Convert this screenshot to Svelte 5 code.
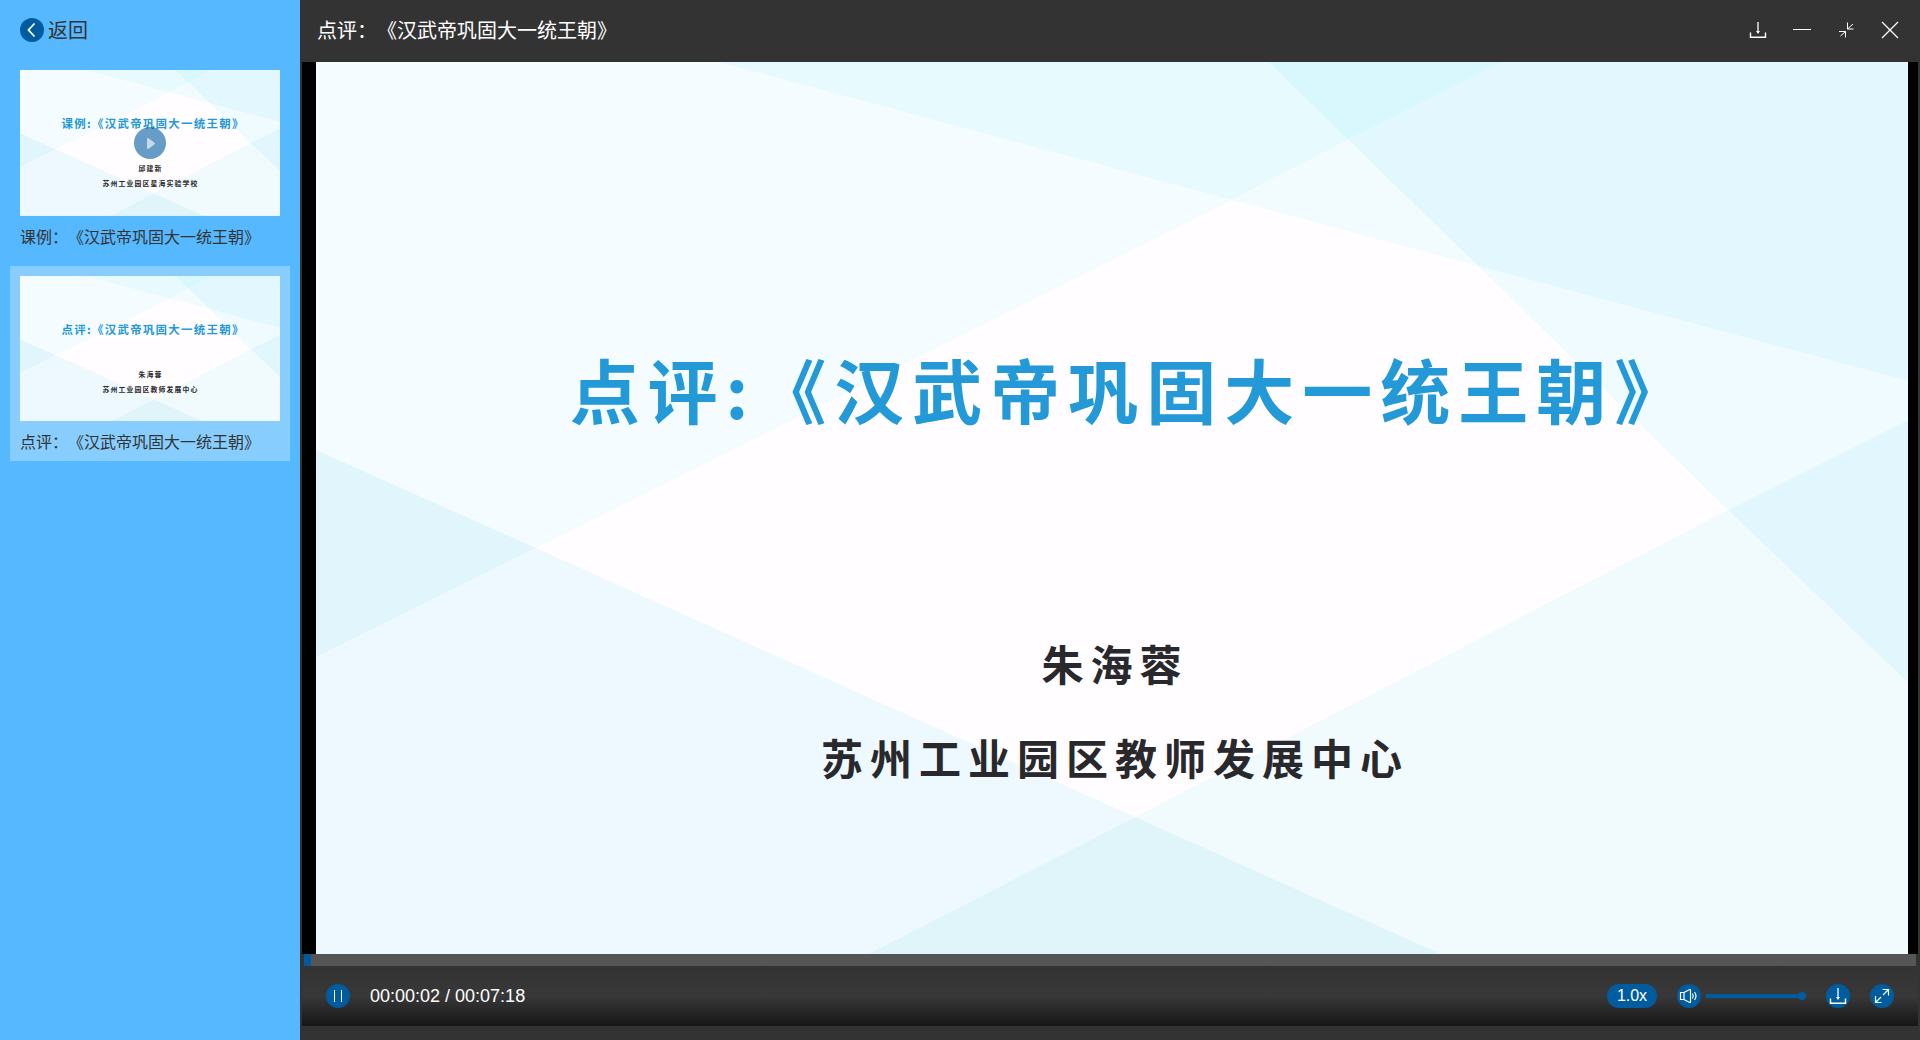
<script>
  const facets = [
    ['0,0 402,0 916,138 220,486 0,388', '#f4fcff'],
    ['402,0 952,0 1032,78 916,138', '#e7fafe'],
    ['952,0 1187,0 1032,78', '#d9f8fe'],
    ['1187,0 1592,0 1592,319 1162,204 1032,78', '#e3f7fe'],
    ['916,138 1032,78 1162,204', '#f2fcff'],
    ['1162,204 1592,319 1592,358 1412,448', '#effbfe'],
    ['1592,358 1592,621 1412,448', '#e2f7fd'],
    ['1412,448 1592,621 1592,892 1125,892 819,755', '#f1fafd'],
    ['819,755 1125,892 552,892', '#e0f5fa'],
    ['0,595 220,486 819,755 552,892 0,892', '#edf9fe'],
    ['0,388 220,486 0,595', '#e1f6fc']
  ];

  const lessons = [
    {
      label: '课例：《汉武帝巩固大一统王朝》',
      title: '课例:《汉武帝巩固大一统王朝》',
      teacher: '邱建新',
      school: '苏州工业园区星海实验学校'
    },
    {
      label: '点评：《汉武帝巩固大一统王朝》',
      title: '点评:《汉武帝巩固大一统王朝》',
      teacher: '朱海蓉',
      school: '苏州工业园区教师发展中心'
    }
  ];

  let current = $state(1);
  let paused = $state(false);
  let volume = $state(100);
  const progress = 2 / 438 * 100;
</script>

{#snippet slide(lesson)}
  <svg class="slide" viewBox="0 0 1592 892" role="img" aria-label={lesson.title}>
    <rect width="1592" height="892" fill="#fffdff" />
    {#each facets as [points, fill]}
      <polygon {points} {fill} />
    {/each}
    <text class="slide-title" x="815" y="357">{lesson.title}</text>
    <text class="slide-name" x="799" y="619">{lesson.teacher}</text>
    <text class="slide-name" x="799" y="713">{lesson.school}</text>
  </svg>
{/snippet}

{#snippet downloadIcon()}
  <svg class="icon" viewBox="0 0 24 24">
    <path d="M12 4v10.500" stroke-width="1.300" />
    <path d="M4.500 14.500v4.700h15v-4.700" stroke-width="1.400" />
    <path class="solid" d="M10 13h4l-2 3z" />
  </svg>
{/snippet}

<div class="app">
  <aside>
    <button class="back">
      <svg viewBox="0 0 24 24">
        <circle cx="12" cy="12" r="12" fill="#005c9f" />
        <path d="M14.500 5.500 8.500 12l6 6.500" fill="none" stroke="#fff" stroke-width="1.800" />
      </svg>
      <span>返回</span>
    </button>
    <nav>
      {#each lessons as lesson, i}
        <button class="lesson" class:active={i === current} onclick={() => (current = i)}>
          <span class="thumb">
            {@render slide(lesson)}
            {#if i !== current}
              <svg class="play" viewBox="0 0 32 32">
                <circle cx="16" cy="16" r="16" fill="#005c9f" fill-opacity="0.6" />
                <path d="M14 12v9l6-4.500z" fill="#c3daea" stroke="#c3daea" stroke-width="2" stroke-linejoin="round" />
              </svg>
            {/if}
          </span>
          <span class="label">{lesson.label}</span>
        </button>
      {/each}
    </nav>
  </aside>

  <main>
    <header>
      <h1>{lessons[current].label}</h1>
      <button class="tool" aria-label="下载">{@render downloadIcon()}</button>
      <button class="tool" aria-label="最小化">
        <svg class="icon" viewBox="0 0 24 24"><path d="M3 11.500h18" /></svg>
      </button>
      <button class="tool" aria-label="还原">
        <svg class="icon" viewBox="0 0 24 24">
          <path d="M13.500 4.500v6.500h6M13.500 11l5.500-5M5 13.500h6.500v6M11.500 13.500 6.500 18" />
        </svg>
      </button>
      <button class="tool" aria-label="关闭">
        <svg class="icon" viewBox="0 0 24 24"><path d="m4 4 16 16M20 4 4 20" stroke-width="1.200" /></svg>
      </button>
    </header>

    <section class="player">
      <div class="video">{@render slide(lessons[current])}</div>
      <div class="progress"><div class="played" style="width: {progress}%"></div></div>
      <div class="controls">
        <button class="round" aria-label="暂停" onclick={() => (paused = !paused)}>
          <svg class="icon" viewBox="0 0 24 24">
            {#if paused}
              <path d="M9 6v12l9-6z" />
            {:else}
              <path d="M8.500 6v12M15.500 6v12" />
            {/if}
          </svg>
        </button>
        <span class="time">00:00:02 / 00:07:18</span>
        <button class="speed">1.0x</button>
        <div class="sound">
          <button class="round" aria-label="静音">
            <svg class="icon" viewBox="0 0 24 24">
              <path d="M3.500 8.500h3.500v7H3.500zM7 8.500 12.500 5.500h1v13h-1L7 15.500M15.500 9.500q1.500 2.500 0 5M17.500 8q3 4 0 8" stroke-width="1.200" />
            </svg>
          </button>
          <input type="range" min="0" max="100" aria-label="音量" bind:value={volume} />
        </div>
        <button class="round" aria-label="下载视频">{@render downloadIcon()}</button>
        <button class="round" aria-label="全屏">
          <svg class="icon" viewBox="0 0 24 24">
            <path d="M12.500 5.500h6v6M18.500 5.500l-5.500 5.500M5.500 12v6.500h6M5.500 18.500 11 13" stroke-width="1.200" />
          </svg>
        </button>
      </div>
    </section>
  </main>
</div>

<style>
  :global(body) {
    margin: 0;
  }

  .app {
    display: flex;
    min-height: 100vh;
    background: #333;
    color: #fff;
    font-family: 'Liberation Sans', 'Noto Sans CJK SC', sans-serif;
  }

  button {
    padding: 0;
    border: 0;
    background: none;
    color: inherit;
    font: inherit;
    cursor: pointer;
  }

  svg {
    display: block;
  }

  aside {
    flex: 0 0 300px;
    background: #56b9ff;
    color: #333;
  }

  .back {
    display: flex;
    align-items: center;
    gap: 4px;
    height: 60px;
    padding-left: 20px;
    font-size: 20px;
    line-height: 24px;
  }

  .back span,
  h1 {
    padding-top: 2px;
  }

  .back svg {
    width: 24px;
    height: 24px;
  }

  nav {
    display: flex;
    flex-direction: column;
    gap: 10px;
    padding: 0 10px;
  }

  .lesson {
    padding: 10px 10px 0;
    text-align: left;
  }

  .lesson.active {
    background: #87ceff;
  }

  .thumb {
    display: grid;
    place-items: center;
  }

  .thumb > :global(svg) {
    grid-area: 1 / 1;
  }

  .play {
    width: 32px;
    height: 32px;
  }

  .label {
    display: block;
    padding-top: 4px;
    font-size: 16px;
    line-height: 36px;
    white-space: nowrap;
  }

  .label,
  h1 {
    text-spacing-trim: space-all;
  }

  .slide {
    width: 100%;
    height: 100%;
  }

  .slide-title,
  .slide-name {
    font-family: 'Noto Sans CJK SC', sans-serif;
    font-weight: 700;
    text-anchor: middle;
  }

  .slide-title {
    fill: #2399d7;
    font-size: 70px;
    letter-spacing: 8px;
  }

  .slide-name {
    fill: #29292d;
    font-size: 42px;
    letter-spacing: 7px;
  }

  main {
    display: flex;
    flex: 1;
    flex-direction: column;
    min-width: 0;
  }

  header {
    display: flex;
    align-items: center;
    gap: 20px;
    height: 60px;
    padding: 0 18px 2px 17px;
  }

  h1 {
    flex: 1;
    margin: 0;
    font-size: 20px;
    font-weight: 400;
    line-height: 24px;
  }

  .tool,
  .round {
    width: 24px;
    height: 24px;
  }

  .round {
    border-radius: 50%;
    background: #005c9f;
  }

  .icon {
    width: 24px;
    height: 24px;
    fill: none;
    stroke: #fff;
    stroke-width: 1;
  }

  .solid {
    fill: #fff;
    stroke: none;
  }

  .player {
    display: flex;
    flex: 1;
    flex-direction: column;
    padding: 0 2px 14px;
  }

  .video {
    display: grid;
    flex: 1 1 0;
    min-height: 0;
    padding: 0 10px 0 14px;
    background: #000;
  }

  .video .slide {
    min-height: 0;
  }

  .progress {
    height: 12px;
    margin: 0 2px;
    background: #555;
  }

  .played {
    height: 100%;
    background: #005c9f;
  }

  .controls {
    display: flex;
    align-items: center;
    gap: 20px;
    height: 60px;
    padding: 0 24px;
    background: linear-gradient(#333, #383838 50%, #161616);
  }

  .time {
    flex: 1;
    font-size: 18px;
    line-height: 24px;
  }

  .speed {
    width: 50px;
    height: 24px;
    border-radius: 12px;
    background: #005c9f;
    font-size: 16px;
    line-height: 24px;
  }

  .sound {
    display: flex;
    align-items: center;
    gap: 5px;
  }

  input {
    width: 100px;
    height: 8px;
    margin: 0;
    appearance: none;
    background: linear-gradient(#005c9f, #005c9f) center / 100% 4px no-repeat;
    cursor: pointer;
  }

  input::-webkit-slider-thumb {
    width: 8px;
    height: 8px;
    border-radius: 50%;
    appearance: none;
    background: #005c9f;
  }
</style>
